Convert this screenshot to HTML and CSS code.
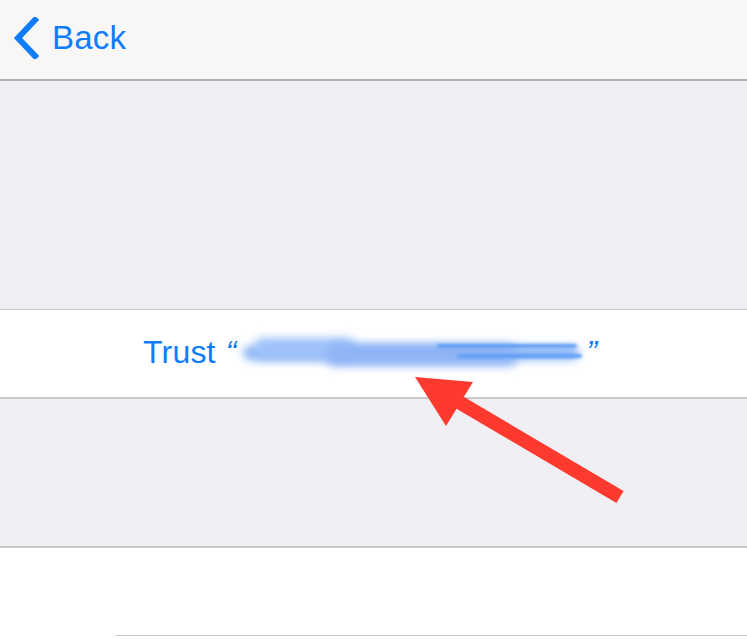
FILE: index.html
```html
<!DOCTYPE html>
<html>
<head>
<meta charset="utf-8">
<link rel="stylesheet" href="styles.css">
</head>
<body>
<div class="screen">
  <header class="nav">
    <div class="back">
      <svg class="chevron" width="26" height="42" viewBox="0 0 26 42"><polyline points="22,3 5,21 22,39" fill="none" stroke="#0f7cfb" stroke-width="6" stroke-linecap="square" stroke-linejoin="miter"/></svg>
      <span class="back-label">Back</span>
    </div>
  </header>
  <div class="gap gap-top"></div>
  <div class="cell trust">
    <span class="trust-text"><span>Trust</span><span class="quote">“</span><span class="blur-wrap"><span class="blur"></span><span class="blur b2"></span><span class="blur b3"></span><span class="blur b4"></span><span class="blur b5"></span></span><span class="quote">”</span></span>
  </div>
  <div class="gap gap-mid"></div>
  <div class="cell last">
    <div class="sep-inset"></div>
  </div>
  <svg class="arrow" width="747" height="639" viewBox="0 0 747 639">
    <line x1="620" y1="497" x2="452" y2="398" stroke="#fe3a2f" stroke-width="14"/>
    <polygon points="415,377 473,382 446,426" fill="#fe3a2f"/>
  </svg>
</div>
</body>
</html>
```
FILE: styles.css
```css
* { box-sizing: border-box; }
html, body { margin: 0; padding: 0; }
body { width: 747px; height: 639px; overflow: hidden; background: #ffffff; font-family: "Liberation Sans", Arial, sans-serif; }
.screen { position: relative; width: 747px; height: 639px; display: flex; flex-direction: column; }
.nav { height: 81px; background: #f7f7f7; border-bottom: 2px solid #b1b1b3; display: flex; align-items: center; padding-left: 13px; padding-bottom: 4px; }
.back { display: flex; align-items: center; gap: 13px; color: #0f7cfb; }
.chevron { display: block; margin-top: 1px; }
.back-label { font-size: 33px; letter-spacing: 0.2px; line-height: 1; }
.gap { background: #efeff4; }
.gap-top { height: 229px; border-bottom: 1px solid #c8c7cc; }
.cell { background: #ffffff; }
.trust { height: 89px; border-bottom: 2px solid #c8c7cc; display: flex; align-items: center; padding-left: 143px; padding-bottom: 2px; }
.trust-text { font-size: 32px; color: #0f7cfb; display: flex; align-items: center; letter-spacing: 0.2px; white-space: nowrap; }
.quote { font-style: italic; margin-left: 10px; }
.quote + .blur-wrap { margin-left: 0; }
.blur-wrap + .quote { margin-left: 0; }
.blur-wrap { position: relative; display: inline-block; width: 348px; height: 34px; margin: 0 2px; }
.blur { position: absolute; left: 6px; top: 10px; width: 336px; height: 14px; background: #8ab6f7; border-radius: 8px; filter: blur(4px); }
.blur.b2 { left: 18px; top: 2px; width: 100px; height: 22px; background: #9ec2f9; filter: blur(5px); }
.blur.b3 { left: 90px; top: 8px; width: 190px; height: 22px; background: #8fb4f6; filter: blur(5px); }
.blur.b4 { left: 200px; top: 8px; width: 140px; height: 4px; background: #5d9df4; filter: blur(1.5px); }
.blur.b5 { left: 220px; top: 18px; width: 125px; height: 4px; background: #5d9df4; filter: blur(1.5px); }
.gap-mid { height: 149px; border-bottom: 2px solid #c8c7cc; }
.last { flex: 1; position: relative; display: flex; flex-direction: column; justify-content: flex-end; padding-bottom: 3px; }
.sep-inset { margin-left: 116px; height: 1px; background: #c8c7cc; }
.arrow { position: absolute; left: 0; top: 0; pointer-events: none; }
```
